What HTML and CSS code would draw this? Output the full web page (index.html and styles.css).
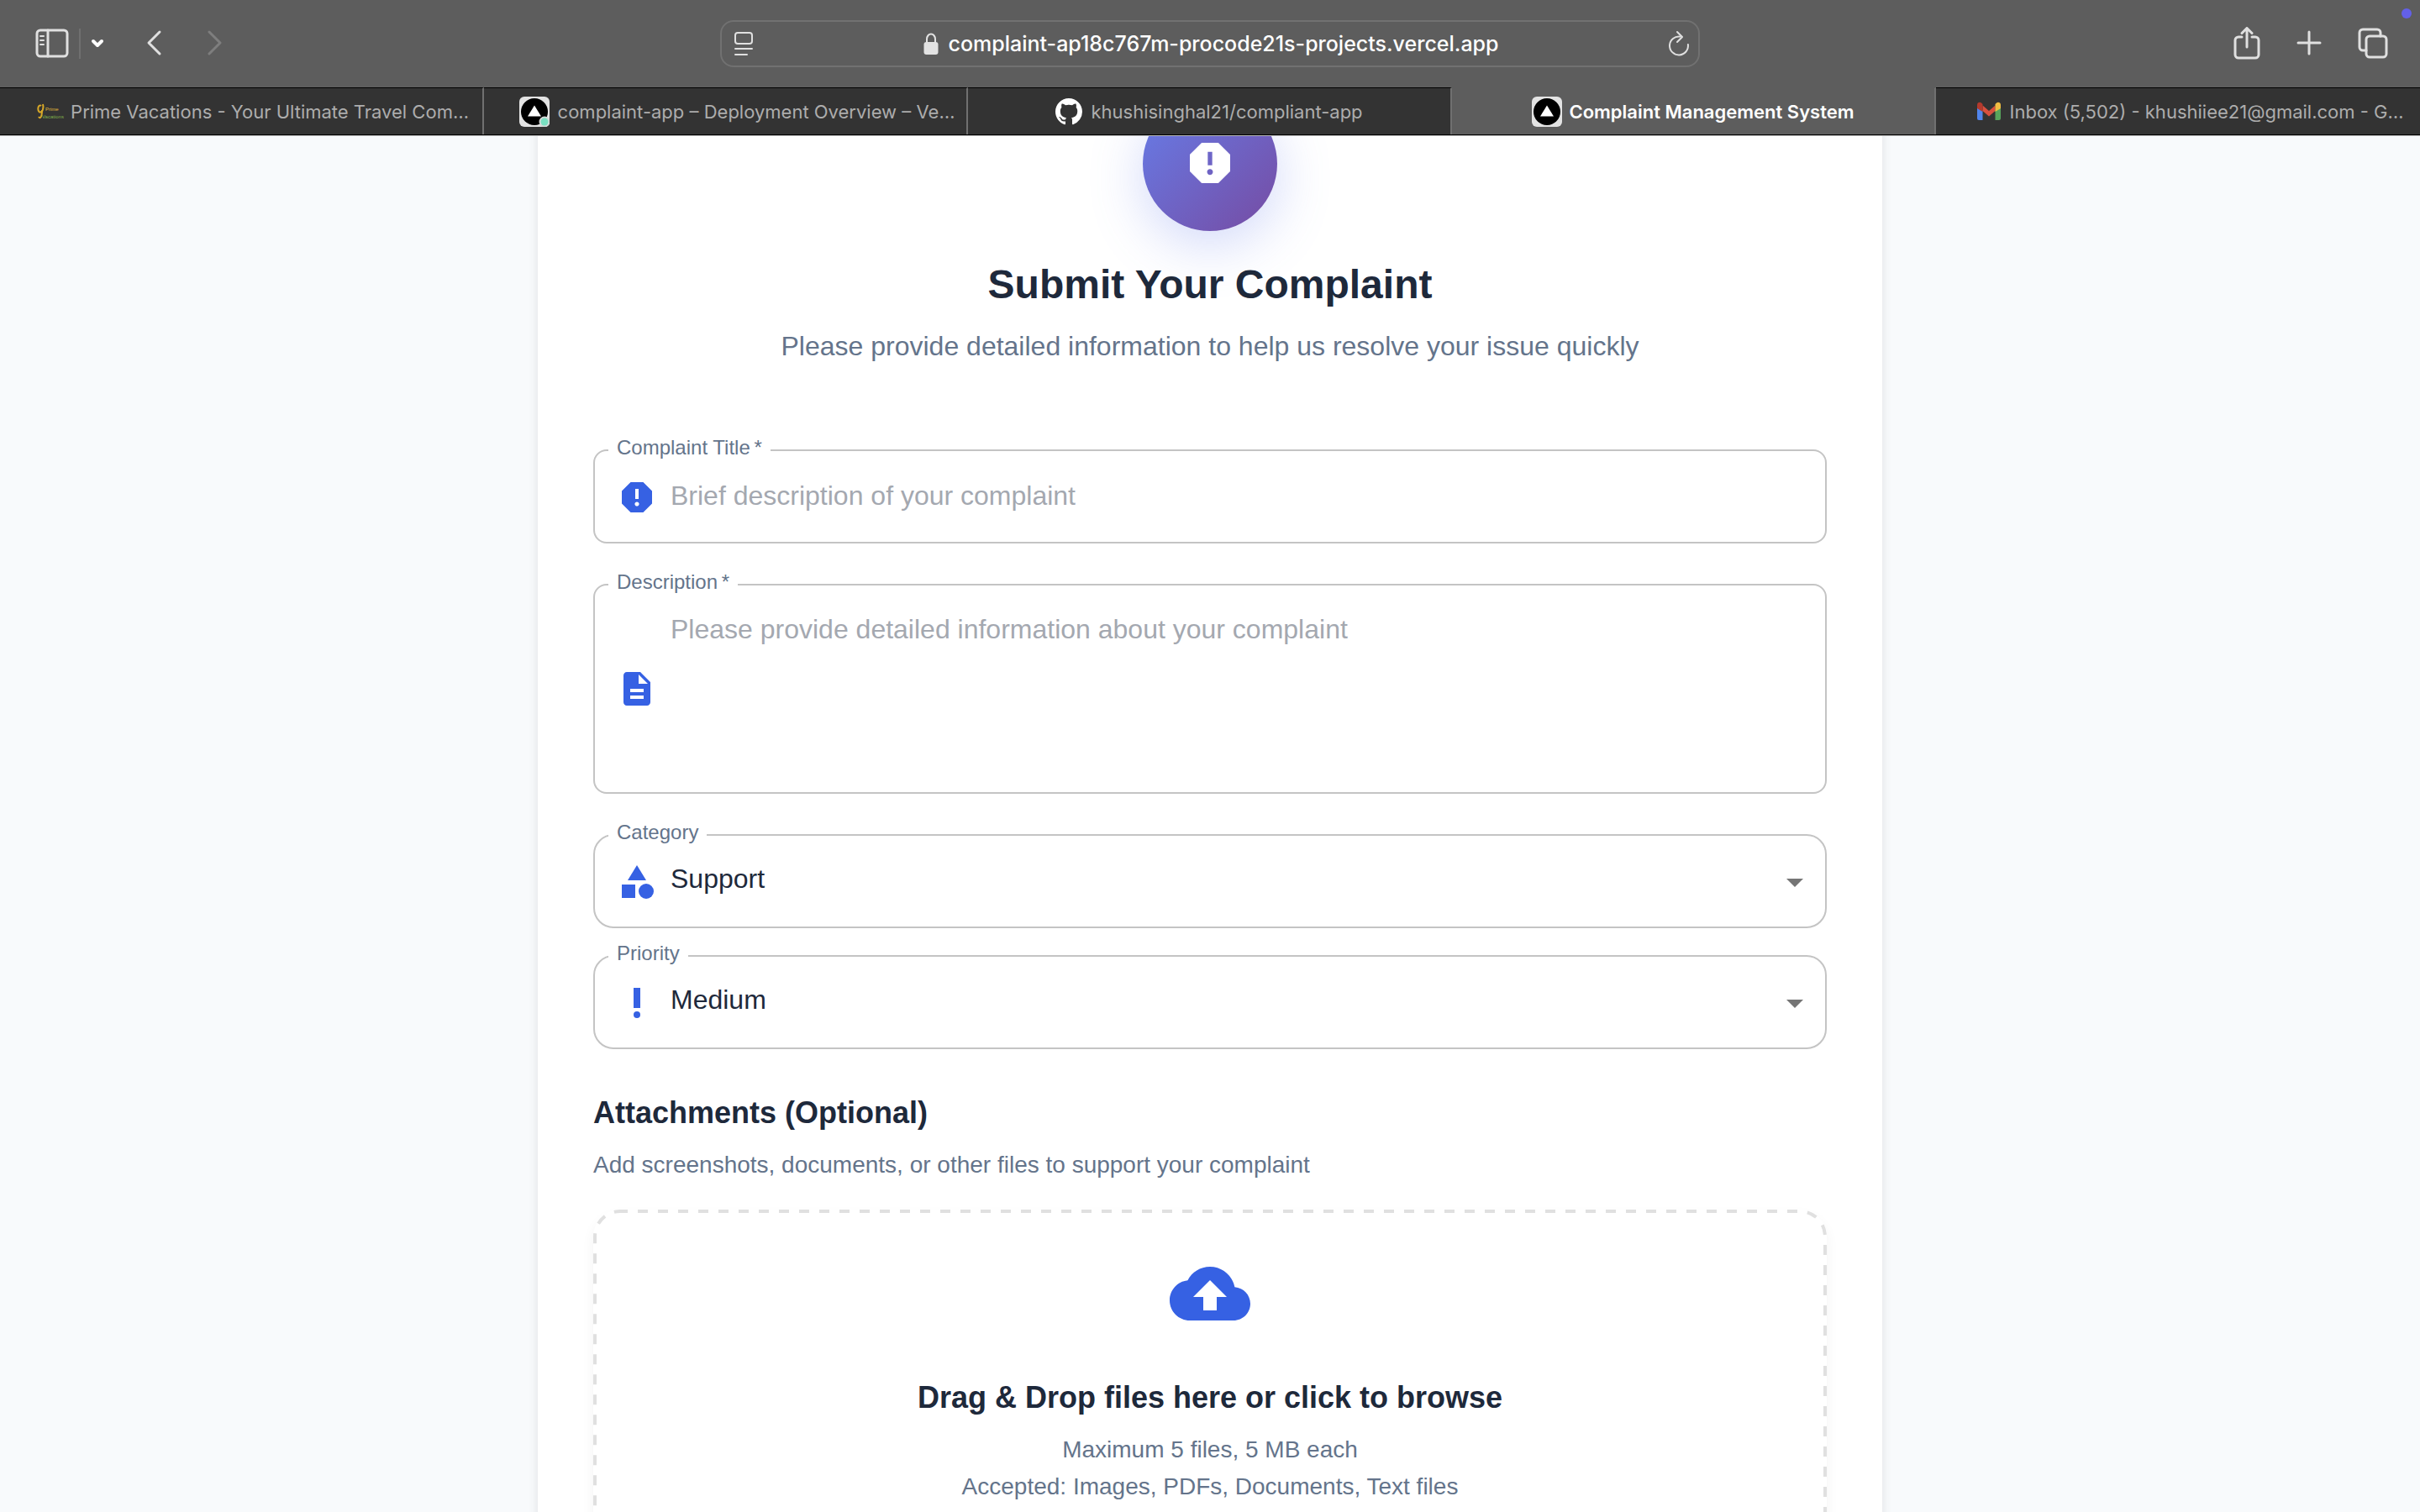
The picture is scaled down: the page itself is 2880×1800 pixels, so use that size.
FILE: index.html
```html
<!DOCTYPE html>
<html lang="en">
<head>
<meta charset="utf-8">
<meta name="viewport" content="width=device-width, initial-scale=1">
<title>Complaint Management System</title>
<link rel="stylesheet" href="styles.css">
</head>
<body>
<header class="browser">
  <div class="toolbar">
    <div class="tools">
      <button class="tool" aria-label="Show sidebar"><svg width="40" height="36" viewBox="0 0 40 36" class="line"><rect x="2" y="2" width="36" height="31" rx="4"/><path d="M15 2v31"/><path class="thin" d="M6 9h4M6 14h4M6 19h4"/></svg></button>
      <span class="divider"></span>
      <button class="tool tool-menu" aria-label="Tab groups"><svg width="16" height="36" viewBox="0 0 16 36" class="line strong"><path d="M3 15l5 5 5-5"/></svg></button>
      <button class="tool tool-back" aria-label="Back"><svg width="20" height="36" viewBox="0 0 20 36" class="line"><path d="M17 4L4 17l13 13"/></svg></button>
      <button class="tool tool-forward" aria-label="Forward" disabled><svg width="20" height="36" viewBox="0 0 20 36" class="line"><path d="M4 4l13 13L4 30"/></svg></button>
    </div>
    <div class="address">
      <button class="tool" aria-label="Page menu"><svg width="24" height="32" viewBox="0 0 24 32" class="line thin"><rect x="2" y="3" width="20" height="13" rx="3"/><path d="M2 22h20M2 29h14"/></svg></button>
      <span class="url"><svg width="18" height="28" viewBox="0 0 18 28"><path d="M4 13V8.500a5 6 0 0 1 10 0V13" fill="none" stroke="#e3e3e3" stroke-width="2"/><rect x="0.500" y="12" width="17" height="15" rx="3" fill="#e3e3e3"/></svg><span>complaint-ap18c767m-procode21s-projects.vercel.app</span></span>
      <button class="tool" aria-label="Reload"><svg width="26" height="32" viewBox="0 0 26 32" class="line thin"><path d="M14.500 7.500a11 11 0 1 0 9.400 9.500"/><path d="M11 2l6 6-6 6"/></svg></button>
    </div>
    <div class="tools tools-end">
      <button class="tool" aria-label="Share"><svg width="32" height="40" viewBox="0 0 32 40" class="line"><path d="M10 12H6a4 4 0 0 0-4 4v17a4 4 0 0 0 4 4h20a4 4 0 0 0 4-4V16a4 4 0 0 0-4-4h-4"/><path d="M16 24V2M10 7.500L16 1.500l6 6"/></svg></button>
      <button class="tool" aria-label="New tab"><svg width="30" height="40" viewBox="0 0 30 40" class="line"><path d="M15 6v26M2 19h26"/></svg></button>
      <button class="tool" aria-label="Tab overview"><svg width="36" height="40" viewBox="0 0 36 40" class="line"><rect x="10" y="11" width="24" height="25" rx="4"/><path d="M10 28H6a4 4 0 0 1-4-4V7a4 4 0 0 1 4-4h17a4 4 0 0 1 4 4v4"/></svg></button>
    </div>
    <span class="status-dot"></span>
  </div>
  <nav class="tabs" aria-label="Open tabs">
    <a class="tab tab-long" href="#"><svg width="34" height="24" viewBox="0 0 34 24" class="prime"><path d="M5 5a2.500 4 0 1 0 0 7c2 0 3-6 2-9M6 10c0 8-2 11-4 8" fill="none" stroke="#d9a928" stroke-width="2"/><text x="10" y="11" fill="#e0b93c">Prime</text><text x="6" y="20" fill="#7fae4a">Vacations</text></svg><span>Prime Vacations - Your Ultimate Travel Com…</span></a>
    <a class="tab tab-long" href="#"><svg width="36" height="36" viewBox="0 0 36 36"><rect width="36" height="36" rx="6" fill="#e3e3e3"/><circle cx="18" cy="18" r="16" fill="#000"/><path d="M18 10.500l8 13H10z" fill="#fff"/><circle cx="30" cy="30" r="6.500" fill="#d5d9d8"/><circle cx="30" cy="30" r="4.500" fill="#79dfc1"/></svg><span>complaint-app – Deployment Overview – Ve…</span></a>
    <a class="tab" href="#"><svg width="32" height="32" viewBox="0 0 16 16"><path fill="#fff" d="M8 0C3.580 0 0 3.580 0 8c0 3.540 2.290 6.530 5.470 7.590.4.070.55-.17.55-.38 0-.19-.01-.82-.01-1.490-2.010.37-2.530-.49-2.690-.94-.09-.23-.48-.94-.82-1.130-.28-.15-.68-.52-.01-.53.63-.01 1.080.58 1.230.82.72 1.210 1.870.87 2.330.66.07-.52.28-.87.51-1.070-1.780-.2-3.640-.89-3.640-3.950 0-.87.31-1.590.82-2.150-.08-.2-.36-1.020.08-2.120 0 0 .67-.21 2.200.82.64-.18 1.320-.27 2-.27s1.360.09 2 .27c1.530-1.040 2.200-.82 2.200-.82.44 1.100.16 1.920.08 2.120.51.56.82 1.270.82 2.150 0 3.070-1.870 3.750-3.650 3.950.29.25.54.73.54 1.480 0 1.070-.01 1.930-.01 2.200 0 .21.15.46.55.38A8.010 8.010 0 0 0 16 8c0-4.420-3.580-8-8-8z"/></svg><span>khushisinghal21/compliant-app</span></a>
    <a class="tab tab-active" href="#" aria-current="page"><svg width="36" height="36" viewBox="0 0 36 36"><rect width="36" height="36" rx="6" fill="#e3e3e3"/><circle cx="18" cy="18" r="16" fill="#000"/><path d="M18 10.500l8 13H10z" fill="#fff"/></svg><span>Complaint Management System</span></a>
    <a class="tab tab-long" href="#"><svg width="30" height="24" viewBox="0 0 30 24"><path d="M1 7v13a2 2 0 0 0 2 2h4.500V10z" fill="#5085ed"/><path d="M29 7v13a2 2 0 0 1-2 2h-4.500V10z" fill="#58a55c"/><path d="M7.500 4.500L15 11l7.500-6.500V11L15 17.500 7.500 11z" fill="#d8503f"/><path d="M1 8V4c0-3 3-4 5-2.500L7.500 3v9z" fill="#b43a2d"/><path d="M29 8V4c0-3-3-4-5-2.500L22.500 3v9z" fill="#f1bd42"/></svg><span>Inbox (5,502) - khushiiee21@gmail.com - G…</span></a>
  </nav>
</header>
<main class="page">
  <section class="card">
    <div class="badge"><svg width="64" height="64" viewBox="0 0 24 24" fill="#fff"><path d="M15.730 3H8.270L3 8.270v7.460L8.270 21h7.460L21 15.730V8.270L15.730 3zM12 17.300c-.72 0-1.300-.58-1.300-1.300 0-.72.58-1.300 1.300-1.300.72 0 1.300.58 1.300 1.300 0 .72-.58 1.300-1.300 1.300zm1-4.300h-2V7h2v6z"/></svg></div>
    <h1 class="title">Submit Your Complaint</h1>
    <p class="subtitle">Please provide detailed information to help us resolve your issue quickly</p>
    <form class="form">
      <fieldset class="field">
        <legend class="legend"><label for="title">Complaint Title&thinsp;*</label></legend>
        <div class="row">
          <svg class="icon" viewBox="0 0 24 24"><path d="M15.730 3H8.270L3 8.270v7.460L8.270 21h7.460L21 15.730V8.270L15.730 3zM12 17.300c-.72 0-1.300-.58-1.300-1.300 0-.72.58-1.300 1.300-1.300.72 0 1.300.58 1.300 1.300 0 .72-.58 1.300-1.300 1.300zm1-4.300h-2V7h2v6z"/></svg>
          <input class="control" id="title" type="text" placeholder="Brief description of your complaint">
        </div>
      </fieldset>
      <fieldset class="field field-area">
        <legend class="legend"><label for="description">Description&thinsp;*</label></legend>
        <div class="row">
          <svg class="icon" viewBox="0 0 24 24"><path d="M14 2H6c-1.100 0-1.990.9-1.990 2L4 20c0 1.100.89 2 1.990 2H18c1.100 0 2-.9 2-2V8l-6-6zm2 16H8v-2h8v2zm0-4H8v-2h8v2zm-3-5V3.500L18.500 9H13z"/></svg>
          <textarea class="control" id="description" rows="4" placeholder="Please provide detailed information about your complaint"></textarea>
        </div>
      </fieldset>
      <fieldset class="field field-select">
        <legend class="legend"><label for="category">Category</label></legend>
        <div class="row">
          <svg class="icon" viewBox="0 0 24 24"><path d="M12 2l-5.500 9h11z"/><circle cx="17.500" cy="17.500" r="4.500"/><path d="M3 13.500h8v8H3z"/></svg>
          <select class="control" id="category"><option>Support</option></select>
          <svg class="arrow" viewBox="0 0 24 24"><path d="M7 10l5 5 5-5z"/></svg>
        </div>
      </fieldset>
      <fieldset class="field field-select field-tight">
        <legend class="legend"><label for="priority">Priority</label></legend>
        <div class="row">
          <svg class="icon" viewBox="0 0 24 24"><circle cx="12" cy="19" r="2"/><path d="M10 3h4v12h-4z"/></svg>
          <select class="control" id="priority"><option>Medium</option></select>
          <svg class="arrow" viewBox="0 0 24 24"><path d="M7 10l5 5 5-5z"/></svg>
        </div>
      </fieldset>
      <h2 class="heading">Attachments (Optional)</h2>
      <p class="note">Add screenshots, documents, or other files to support your complaint</p>
      <button class="dropzone" type="button">
        <svg class="dashes" aria-hidden="true"><rect class="dash-line" x="2" y="2" rx="30"/></svg>
        <svg width="96" height="96" viewBox="0 0 24 24" fill="#3661e3"><path d="M19.350 10.040C18.670 6.590 15.640 4 12 4 9.110 4 6.600 5.640 5.350 8.040 2.340 8.360 0 10.910 0 14c0 3.310 2.690 6 6 6h13c2.760 0 5-2.240 5-5 0-2.640-2.050-4.780-4.650-4.960zM14 13v4h-4v-4H7l5-5 5 5h-3z"/></svg>
        <span class="drop-title">Drag &amp; Drop files here or click to browse</span>
        <span class="drop-note">Maximum 5 files, 5 MB each<br>Accepted: Images, PDFs, Documents, Text files</span>
      </button>
    </form>
  </section>
</main>
</body>
</html>
```
FILE: styles.css
```css
* {
  box-sizing: border-box;
}

body {
  margin: 0;
  height: 100vh;
  display: flex;
  flex-direction: column;
  overflow: hidden;
  background: #f8fafc;
  color: #1e293b;
  font-family: "Liberation Sans", Arial, sans-serif;
}

button,
input,
textarea,
select {
  font: inherit;
  color: inherit;
}

svg {
  flex: none;
  display: block;
}

/* Browser chrome */
.browser {
  flex: none;
  background: #5d5d5d;
  font-family: Inter, sans-serif;
  border-bottom: 1px solid #b5b5b5;
}

.toolbar {
  position: relative;
  height: 104px;
  padding: 0 38px;
  display: grid;
  grid-template-columns: 1fr minmax(0, 1166px) 1fr;
  align-items: center;
}

.tools {
  padding-left: 4px;
  display: flex;
  align-items: center;
}

.tools-end {
  justify-content: flex-end;
  gap: 43px;
}

.tool {
  padding: 0;
  border: 0;
  background: none;
}

.tool-menu {
  margin-left: 12px;
}

.tool-back {
  margin-left: 49px;
}

.tool-forward {
  margin-left: 52px;
  opacity: 0.25;
}

.divider {
  width: 2px;
  height: 36px;
  margin-left: 12px;
  background: #707070;
}

.line {
  fill: none;
  stroke: #e0e0e0;
  stroke-width: 3;
  stroke-linecap: round;
  stroke-linejoin: round;
}

.line.thin,
.line .thin {
  stroke-width: 2;
}

.line.strong {
  stroke: #fff;
  stroke-width: 4;
}

.address {
  height: 56px;
  padding: 0 10px 0 14px;
  display: flex;
  align-items: center;
  justify-content: space-between;
  border: 2px solid #717171;
  border-radius: 16px;
}

.url {
  display: flex;
  align-items: center;
  gap: 12px;
  color: #fff;
  font-size: 25px;
  font-weight: 500;
  white-space: nowrap;
}

.status-dot {
  position: absolute;
  top: 10px;
  right: 10px;
  width: 12px;
  height: 12px;
  border-radius: 50%;
  background: #6360e8;
}

.tabs {
  display: grid;
  grid-template-columns: repeat(5, minmax(0, 1fr));
  border-bottom: 1px solid #000;
}

.tab {
  height: 56px;
  padding: 0 20px;
  display: flex;
  align-items: center;
  justify-content: center;
  gap: 10px;
  border-top: 1px solid #000;
  border-right: 2px solid #707070;
  background: #333;
  color: #adadad;
  font-size: 22px;
  text-decoration: none;
  white-space: nowrap;
}

.tab:last-child {
  border-right: 0;
}

.tab-long {
  padding-left: 48px;
}

.tab-active {
  gap: 8px;
  border-top-color: #5d5d5d;
  background: #5d5d5d;
  color: #fff;
  font-weight: 600;
}

.prime {
  margin-right: -4px;
  font-family: "Liberation Sans", Arial, sans-serif;
  font-size: 6px;
}

/* Complaint form, scrolled past the top of its card */
.page {
  flex: 1;
  min-height: 0;
  overflow: hidden;
}

.card {
  max-width: 1600px;
  margin: -113px auto 0;
  padding: 66px;
  background: #fff;
  box-shadow: 0 4px 12px rgba(0, 0, 0, 0.1);
  text-align: center;
}

.badge {
  width: 160px;
  height: 160px;
  margin: 0 auto 32px;
  padding-bottom: 2px;
  display: flex;
  align-items: center;
  justify-content: center;
  border-radius: 50%;
  background: linear-gradient(135deg, #667eea, #764ba2);
  box-shadow: 0 16px 64px rgba(102, 126, 234, 0.3);
}

.title {
  margin: 0 0 16px;
  font-size: 48px;
  line-height: 64px;
}

.subtitle {
  margin: 0 0 83px;
  color: #64748b;
  font-size: 32px;
  line-height: 50px;
}

.form {
  text-align: left;
}

.field {
  min-width: 0;
  margin: 0 0 33px;
  padding: 16px 12px 29px 16px;
  border: 2px solid #c4c4c4;
  border-radius: 16px;
}

.field-area {
  padding-top: 14px;
}

.field-select {
  margin-bottom: 17px;
  border-radius: 24px;
}

.field-tight {
  margin-bottom: 0;
}

.legend {
  padding: 1px 10px 7px;
  color: #64748b;
  font-size: 24px;
  line-height: 24px;
}

.row {
  padding-left: 10px;
  display: flex;
  align-items: center;
}

.icon {
  width: 48px;
  height: 48px;
  margin-right: 16px;
  fill: #3661e3;
}

.arrow {
  width: 48px;
  height: 48px;
  fill: #757575;
}

.control {
  flex: 1;
  min-width: 0;
  height: 48px;
  margin: 0;
  padding: 0 0 4px;
  border: 0;
  outline: 0;
  background: none;
  font-size: 32px;
  line-height: 46px;
  appearance: none;
  resize: none;
}

textarea.control {
  height: 188px;
}

select.control {
  padding-bottom: 8px;
  line-height: 40px;
}

.control::placeholder {
  color: #a4a8b0;
  opacity: 1;
}

.heading {
  margin: 48px 0 14px;
  font-size: 36px;
  line-height: 56px;
}

.note {
  margin: 0 0 33px;
  color: #64748b;
  font-size: 28px;
  line-height: 40px;
}

.dropzone {
  position: relative;
  width: 100%;
  padding: 52px;
  display: flex;
  flex-direction: column;
  align-items: center;
  border: 0;
  border-radius: 32px;
  background: #fff;
  box-shadow: 0 8px 16px rgba(0, 0, 0, 0.05);
}

.dashes {
  position: absolute;
  inset: 0;
  width: 100%;
  height: 100%;
}

.dash-line {
  width: calc(100% - 4px);
  height: calc(100% - 4px);
  fill: none;
  stroke: #e0e0e0;
  stroke-width: 4;
  stroke-dasharray: 12 12;
  stroke-dashoffset: 3;
}

.drop-title {
  margin: 48px 0 12px;
  font-size: 36px;
  font-weight: 700;
  line-height: 56px;
}

.drop-note {
  color: #64748b;
  font-size: 28px;
  line-height: 44px;
}
```
